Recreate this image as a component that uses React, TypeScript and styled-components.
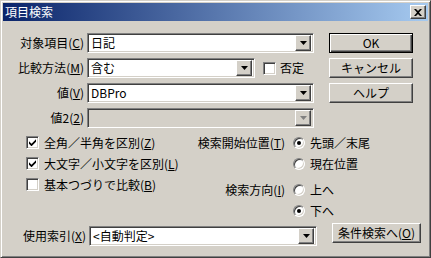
import React from "react";
import styled, { createGlobalStyle, css } from "styled-components";

const GlobalStyle = createGlobalStyle`
  html, body {
    margin: 0;
    padding: 0;
    background: #d4d0c8;
  }
  body {
    font-family: "Noto Sans CJK JP", "Liberation Sans", sans-serif;
    font-size: 12px;
    line-height: 14px;
    color: #000;
  }
`;

// classic 3d edges
const raised = css`
  box-sizing: border-box;
  border: 1px solid;
  border-color: #fff #404040 #404040 #fff;
  box-shadow: inset -1px -1px #808080;
  background: #d4d0c8;
`;

const sunken = css`
  box-sizing: border-box;
  border: 1px solid;
  border-color: #808080 #fff #fff #808080;
  box-shadow: inset 1px 1px #404040, inset -1px -1px #d4d0c8;
`;

const Window = styled.div`
  box-sizing: border-box;
  width: 431px;
  height: 258px;
  padding: 2px;
  border: 1px solid;
  border-color: #d4d0c8 #404040 #404040 #d4d0c8;
  box-shadow: inset 1px 1px #fff, inset -1px -1px #808080;
  background: #d4d0c8;
  display: flex;
  flex-direction: column;
`;

const TitleBar = styled.div`
  height: 18px;
  display: flex;
  align-items: center;
  padding: 0 2px 0 2px;
  background: linear-gradient(to right, #0a246a, #a6caf0);
  color: #fff;
  font-size: 12px;
`;

const CloseButton = styled.div`
  ${raised};
  margin-left: auto;
  width: 16px;
  height: 14px;
  display: flex;
  align-items: center;
  justify-content: center;
`;

const Body = styled.div`
  display: flex;
  flex-direction: column;
  padding-top: 12px;
`;

const TopSection = styled.div`
  display: flex;
`;

const Fields = styled.div`
  display: flex;
  flex-direction: column;
  gap: 5px;
`;

const FieldRow = styled.div`
  display: flex;
  align-items: center;
  height: 20px;
`;

const Label = styled.span<{ $width: number }>`
  width: ${(p) => p.$width}px;
  margin-right: 3px;
  text-align: right;
  white-space: nowrap;
`;

const ComboBox = styled.div<{ $width: number; $disabled?: boolean }>`
  ${sunken};
  width: ${(p) => p.$width}px;
  height: 20px;
  padding: 2px;
  display: flex;
  align-items: center;
  background: ${(p) => (p.$disabled ? "#d4d0c8" : "#fff")};
`;

const ComboText = styled.span`
  flex: 1;
  padding-left: 1px;
  line-height: 16px;
  white-space: nowrap;
`;

const DropButton = styled.div`
  ${raised};
  width: 16px;
  height: 16px;
  flex-shrink: 0;
  display: flex;
  align-items: center;
  justify-content: center;
`;

const ButtonColumn = styled.div`
  display: flex;
  flex-direction: column;
  gap: 5px;
  margin-left: 15px;
`;

const PushButton = styled.div<{ $width: number; $default?: boolean }>`
  ${raised};
  width: ${(p) => p.$width}px;
  height: 20px;
  display: flex;
  align-items: center;
  justify-content: center;
  white-space: nowrap;
  ${(p) =>
    p.$default &&
    css`
      border-color: #000;
      box-shadow: inset 1px 1px #fff, inset -1px -1px #404040,
        inset -2px -2px #808080;
    `}
`;

const CheckBox = styled.div`
  ${sunken};
  width: 13px;
  height: 13px;
  background: #fff;
  display: flex;
  align-items: center;
  justify-content: center;
  flex-shrink: 0;
`;

const InlineCheck = styled.div`
  display: flex;
  align-items: center;
  gap: 4px;
  margin-left: 8px;
`;

const Options = styled.div`
  display: flex;
  margin-top: 4px;
  height: 89px;
`;

const Checks = styled.div`
  width: 151px;
  padding-left: 23px;
  display: flex;
  flex-direction: column;
`;

const CheckRow = styled.div`
  height: 21px;
  display: flex;
  align-items: center;
  gap: 5px;
  white-space: nowrap;
`;

const RadioGroups = styled.div`
  display: flex;
  flex-direction: column;
  gap: 5px;
`;

const RadioGroup = styled.div`
  display: grid;
  grid-template-columns: 108px auto;
  grid-auto-rows: 21px;
  column-gap: 8px;
  align-items: center;
`;

const GroupLabel = styled.span`
  text-align: right;
  white-space: nowrap;
`;

const RadioItem = styled.div`
  grid-column: 2;
  display: flex;
  align-items: center;
  gap: 5px;
  white-space: nowrap;
`;

const RadioCircle = styled.div<{ $on?: boolean }>`
  box-sizing: border-box;
  width: 12px;
  height: 12px;
  border-radius: 50%;
  border: 1px solid;
  border-color: #808080 #fff #fff #808080;
  box-shadow: inset 1px 1px #404040, inset -1px -1px #d4d0c8;
  background: #fff;
  display: flex;
  align-items: center;
  justify-content: center;
  &::after {
    content: "";
    width: 4px;
    height: 4px;
    border-radius: 50%;
    background: ${(p) => (p.$on ? "#000" : "transparent")};
  }
`;

const BottomRow = styled.div`
  display: flex;
  align-items: flex-start;
  margin-top: 2px;
`;

const BottomField = styled.div`
  display: flex;
  align-items: center;
  margin-top: 3px;
`;

const Key = styled.span`
  text-decoration: underline;
  text-underline-offset: 1px;
`;

const Arrow = ({ disabled }: { disabled?: boolean }) => (
  <svg width="7" height="4" viewBox="0 0 7 4">
    <path d="M0 0H7L3.5 4Z" fill={disabled ? "#808080" : "#000"} />
  </svg>
);

const Tick = () => (
  <svg width="7" height="7" viewBox="0 0 7 7">
    <path d="M0 2.2L2.5 4.7L7 0.2V2.8L2.5 7.3L0 4.8Z" fill="#000" />
  </svg>
);

const Combo = ({
  width,
  value,
  disabled,
}: {
  width: number;
  value?: string;
  disabled?: boolean;
}) => (
  <ComboBox $width={width} $disabled={disabled}>
    <ComboText>{value}</ComboText>
    <DropButton>
      <Arrow disabled={disabled} />
    </DropButton>
  </ComboBox>
);

const Mn = ({ text, k }: { text: string; k: string }) => (
  <>
    {text}(<Key>{k}</Key>)
  </>
);

export default function App() {
  return (
    <>
      <GlobalStyle />
      <Window>
        <TitleBar>
          項目検索
          <CloseButton>
            <svg width="8" height="7" viewBox="0 0 8 7">
              <path
                d="M0 0H2L4 2L6 0H8L5 3.5L8 7H6L4 5L2 7H0L3 3.5Z"
                fill="#000"
              />
            </svg>
          </CloseButton>
        </TitleBar>
        <Body>
          <TopSection>
            <Fields>
              <FieldRow>
                <Label $width={81}>
                  <Mn text="対象項目" k="C" />
                </Label>
                <Combo width={227} value="日記" />
              </FieldRow>
              <FieldRow>
                <Label $width={81}>
                  <Mn text="比較方法" k="M" />
                </Label>
                <Combo width={168} value="含む" />
                <InlineCheck>
                  <CheckBox />
                  否定
                </InlineCheck>
              </FieldRow>
              <FieldRow>
                <Label $width={81}>
                  <Mn text="値" k="V" />
                </Label>
                <Combo width={227} value="DBPro" />
              </FieldRow>
              <FieldRow>
                <Label $width={81}>
                  <Mn text="値2" k="2" />
                </Label>
                <Combo width={227} disabled />
              </FieldRow>
            </Fields>
            <ButtonColumn>
              <PushButton $width={84} $default>
                OK
              </PushButton>
              <PushButton $width={84}>キャンセル</PushButton>
              <PushButton $width={84}>ヘルプ</PushButton>
            </ButtonColumn>
          </TopSection>

          <Options>
            <Checks>
              <CheckRow>
                <CheckBox>
                  <Tick />
                </CheckBox>
                <span>
                  <Mn text="全角／半角を区別" k="Z" />
                </span>
              </CheckRow>
              <CheckRow>
                <CheckBox>
                  <Tick />
                </CheckBox>
                <span>
                  <Mn text="大文字／小文字を区別" k="L" />
                </span>
              </CheckRow>
              <CheckRow>
                <CheckBox />
                <span>
                  <Mn text="基本つづりで比較" k="B" />
                </span>
              </CheckRow>
            </Checks>
            <RadioGroups>
              <RadioGroup>
                <GroupLabel>
                  <Mn text="検索開始位置" k="T" />
                </GroupLabel>
                <RadioItem>
                  <RadioCircle $on />
                  先頭／末尾
                </RadioItem>
                <RadioItem>
                  <RadioCircle />
                  現在位置
                </RadioItem>
              </RadioGroup>
              <RadioGroup>
                <GroupLabel>
                  <Mn text="検索方向" k="I" />
                </GroupLabel>
                <RadioItem>
                  <RadioCircle />
                  上へ
                </RadioItem>
                <RadioItem>
                  <RadioCircle $on />
                  下へ
                </RadioItem>
              </RadioGroup>
            </RadioGroups>
          </Options>

          <BottomRow>
            <BottomField>
              <Label $width={83}>
                <Mn text="使用索引" k="X" />
              </Label>
              <Combo width={228} value="<自動判定>" />
            </BottomField>
            <ButtonColumn>
              <PushButton $width={89}>
                <Mn text="条件検索へ" k="O" />
              </PushButton>
            </ButtonColumn>
          </BottomRow>
        </Body>
      </Window>
    </>
  );
}
